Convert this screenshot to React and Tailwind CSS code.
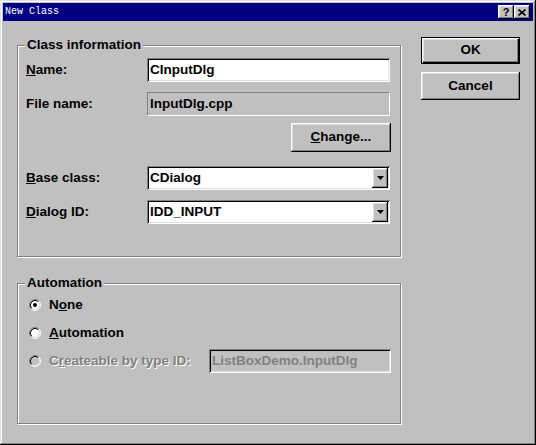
import React from "react";

const raised =
  "shadow-[inset_-1px_-1px_#000,inset_1px_1px_#fff,inset_-2px_-2px_#808080,inset_2px_2px_#dfdfdf]";
const sunken =
  "shadow-[inset_1px_1px_#808080,inset_-1px_-1px_#fff,inset_2px_2px_#000,inset_-2px_-2px_#dfdfdf]";

function Radio({ checked, disabled }) {
  return (
    <svg width="12" height="12" viewBox="0 0 12 12" className="shrink-0">
      <circle cx="6" cy="6" r="4.2" fill={disabled ? "#c0c0c0" : "#fff"} />
      <path d="M2.11 9.89 A5.5 5.5 0 0 1 9.89 2.11" fill="none" stroke="#808080" strokeWidth="1" />
      <path d="M9.89 2.11 A5.5 5.5 0 0 1 2.11 9.89" fill="none" stroke="#fff" strokeWidth="1" />
      <path d="M2.82 9.18 A4.5 4.5 0 0 1 9.18 2.82" fill="none" stroke="#000" strokeWidth="1" />
      <path d="M9.18 2.82 A4.5 4.5 0 0 1 2.82 9.18" fill="none" stroke="#dfdfdf" strokeWidth="1" />
      {checked && <circle cx="6" cy="6" r="2" fill="#000" />}
    </svg>
  );
}

function Combo({ value }) {
  return (
    <div className={`w-[243px] h-[24px] bg-white ${sunken} flex items-center pl-[3px] pr-[2px] py-[2px]`}>
      <span className="flex-1">{value}</span>
      <div className={`w-[16px] h-[20px] bg-[#c0c0c0] ${raised} flex items-center justify-center`}>
        <svg width="7" height="4" viewBox="0 0 7 4">
          <path d="M0 0 H7 L3.5 4 Z" fill="#000" />
        </svg>
      </div>
    </div>
  );
}

function Label({ children }) {
  return <div className="w-[121px] shrink-0">{children}</div>;
}

export default function App() {
  return (
    <div
      className="w-[536px] h-[445px] bg-[#c0c0c0] p-[3px] flex flex-col font-bold text-[13.5px] text-black font-['Liberation_Sans',Arial,sans-serif] shadow-[inset_-1px_-1px_#000,inset_1px_1px_#dfdfdf,inset_-2px_-2px_#808080,inset_2px_2px_#fff]"
    >
      {/* Title bar */}
      <div className="h-[18px] bg-[#000080] flex items-center justify-between pl-[2px] pr-[3px] shrink-0">
        <span className="text-white font-normal text-[10px] font-['Liberation_Mono',monospace] leading-none">
          New Class
        </span>
        <div className="flex">
          <div className={`w-[16px] h-[14px] bg-[#c0c0c0] ${raised} flex items-center justify-center text-[11px] leading-none font-bold`}>
            ?
          </div>
          <div className={`w-[16px] h-[14px] bg-[#c0c0c0] ${raised} flex items-center justify-center`}>
            <svg width="8" height="7" viewBox="0 0 8 7">
              <path d="M0.5 0.5 L7.5 6.5 M7.5 0.5 L0.5 6.5" stroke="#000" strokeWidth="1.6" />
            </svg>
          </div>
        </div>
      </div>

      {/* Content */}
      <div className="flex flex-1">
        {/* Left column */}
        <div className="pl-[14px] pt-[24px] flex flex-col">
          {/* Class information group */}
          <div className="relative w-[384px] h-[212px] border border-[#808080] shadow-[inset_1px_1px_#fff,1px_1px_#fff]">
            <div className="absolute left-[7px] top-[-9px] px-[2px] bg-[#c0c0c0] leading-[16px]">
              Class information
            </div>
            <div className="flex flex-col pl-[8px] pt-[12px]">
              <div className="flex items-center h-[24px]">
                <Label>
                  <u>N</u>ame:
                </Label>
                <div className={`w-[243px] h-[24px] bg-white ${sunken} flex items-center pl-[3px]`}>
                  CInputDlg
                </div>
              </div>
              <div className="flex items-center h-[24px] mt-[10px]">
                <Label>File name:</Label>
                <div className="w-[243px] h-[24px] border border-[#808080] border-b-white border-r-white flex items-center pl-[2px]">
                  InputDlg.cpp
                </div>
              </div>
              <div className="flex mt-[7px] pl-[265px]">
                <div className={`w-[100px] h-[29px] ${raised} flex items-center justify-center`}>
                  <span>
                    <u>C</u>hange...
                  </span>
                </div>
              </div>
              <div className="flex items-center h-[24px] mt-[14px]">
                <Label>
                  <u>B</u>ase class:
                </Label>
                <Combo value="CDialog" />
              </div>
              <div className="flex items-center h-[24px] mt-[10px]">
                <Label>
                  <u>D</u>ialog ID:
                </Label>
                <Combo value="IDD_INPUT" />
              </div>
            </div>
          </div>

          {/* Automation group */}
          <div className="relative mt-[26px] w-[384px] h-[141px] border border-[#808080] shadow-[inset_1px_1px_#fff,1px_1px_#fff]">
            <div className="absolute left-[7px] top-[-9px] px-[2px] bg-[#c0c0c0] leading-[16px]">
              Automation
            </div>
            <div className="flex flex-col pl-[11px] pt-[11px] gap-[8px]">
              <div className="flex items-center h-[20px] gap-[8px]">
                <Radio checked />
                <span>
                  N<u>o</u>ne
                </span>
              </div>
              <div className="flex items-center h-[20px] gap-[8px]">
                <Radio />
                <span>
                  <u>A</u>utomation
                </span>
              </div>
              <div className="flex items-center h-[20px]">
                <Radio disabled />
                <span className="ml-[8px] w-[160px] text-[#808080] [text-shadow:1px_1px_0_#fff]">
                  C<u>r</u>eateable by type ID:
                </span>
                <div className={`w-[182px] h-[24px] bg-[#c0c0c0] ${sunken} flex items-center pl-[3px] text-[#808080]`}>
                  ListBoxDemo.InputDlg
                </div>
              </div>
            </div>
          </div>
        </div>

        {/* Right column */}
        <div className="ml-[20px] pt-[16px] flex flex-col">
          <div className="w-[99px] h-[27px] border border-black shadow-[inset_1px_1px_#fff,inset_-1px_-1px_#000,inset_-2px_-2px_#808080,inset_2px_2px_#dfdfdf] flex items-center justify-center">
            OK
          </div>
          <div className={`mt-[8px] w-[99px] h-[28px] ${raised} flex items-center justify-center`}>
            Cancel
          </div>
        </div>
      </div>
    </div>
  );
}
